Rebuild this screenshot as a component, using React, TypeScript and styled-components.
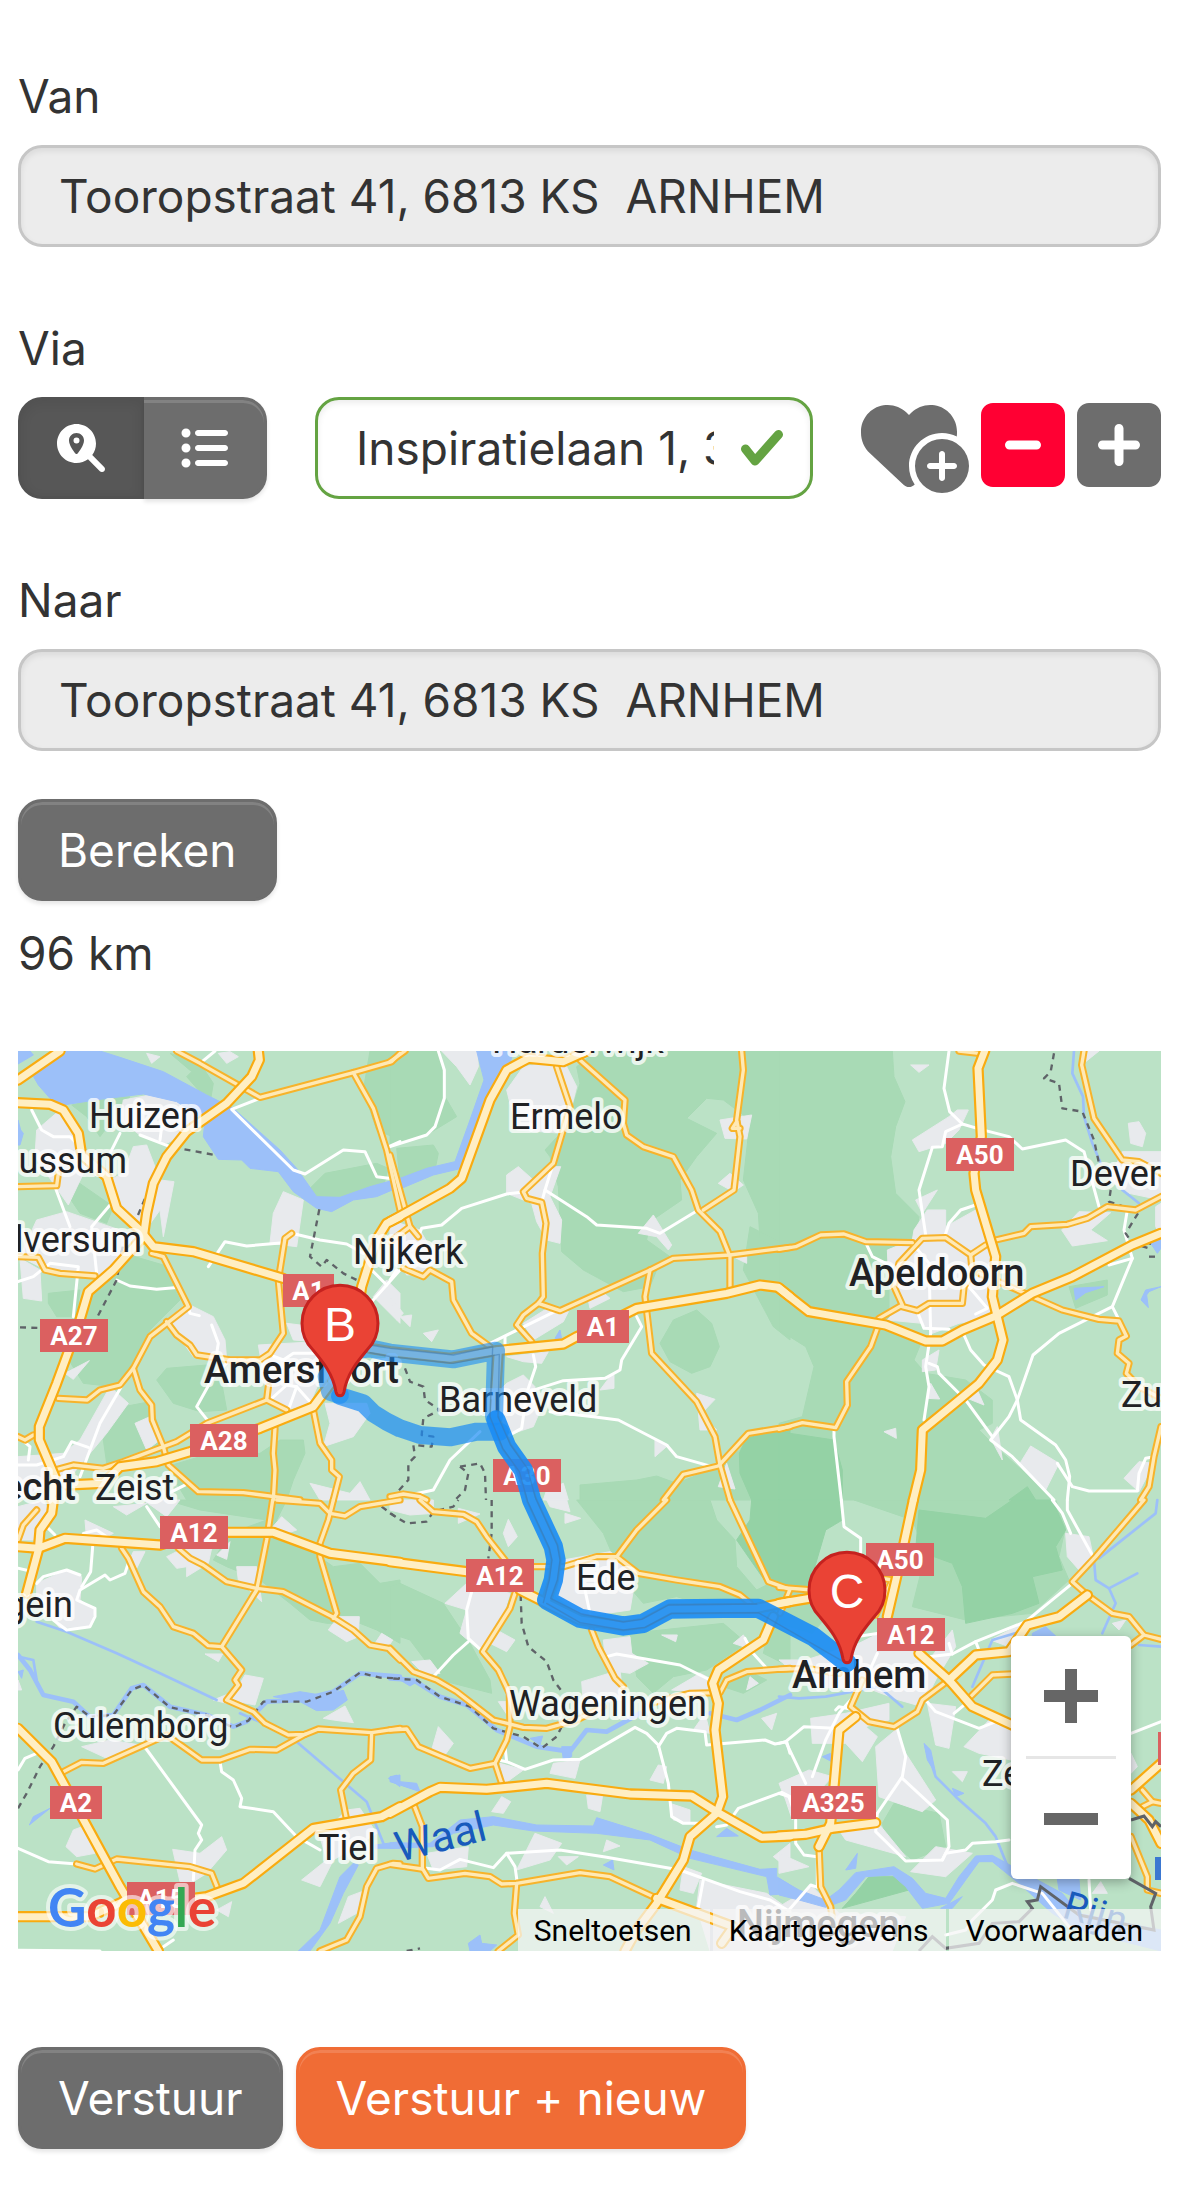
import React from "react";
import styled, { createGlobalStyle, css } from "styled-components";
import {
  FaHeartCirclePlus,
  FaListUl,
  FaMagnifyingGlassLocation,
  FaSquareMinus,
  FaSquarePlus,
} from "react-icons/fa6";

const GlobalStyle = createGlobalStyle`
  *, *::before, *::after { box-sizing: border-box; }
  body {
    margin: 0;
    background: #fff;
    color: #333;
    font-family: Inter, "Liberation Sans", sans-serif;
    font-size: 46px;
    line-height: 72px;
  }
  button, input { font: inherit; color: inherit; }
`;

const Page = styled.form`
  display: flex;
  flex-direction: column;
  padding: 60px 18px 45px;
`;

const Field = styled.div`
  display: flex;
  flex-direction: column;
  gap: 13px;
  margin-bottom: 65px;
`;

const Label = styled.label`
  align-self: flex-start;
`;

const TextInput = styled.input<{ $valid?: boolean }>`
  width: 100%;
  min-width: 0;
  height: 102px;
  padding: 0 ${(p) => (p.$valid ? 96 : 38)}px 0 38px;
  border: 3px solid ${(p) => (p.$valid ? "#64a342" : "#c6c6c6")};
  border-radius: 24px;
  background: ${(p) => (p.$valid ? "#fff" : "#ececec")};
  box-shadow: inset 0 3px 6px rgba(0, 0, 0, 0.08);
  outline: none;
`;

const ViaRow = styled.div`
  display: flex;
  gap: 48px;
`;

const Toggle = styled.div`
  display: flex;
  border-radius: 24px;
`;

const raised = css`
  box-shadow: inset 0 3px 0 rgba(255, 255, 255, 0.15), 0 3px 4px rgba(0, 0, 0, 0.1);
`;

const ToggleButton = styled.button<{ $active?: boolean }>`
  display: flex;
  align-items: center;
  justify-content: center;
  width: ${(p) => (p.$active ? 126 : 123)}px;
  height: 102px;
  padding: 0;
  color: #fff;
  font-size: 48px;
  background: ${(p) => (p.$active ? "#575757" : "#6d6d6d")};
  border: 3px solid ${(p) => (p.$active ? "#525252" : "#6d6d6d")};
  border-radius: ${(p) => (p.$active ? "24px 0 0 24px" : "0 24px 24px 0")};
  border-left-width: ${(p) => (p.$active ? 3 : 0)}px;
  ${(p) => (p.$active ? "box-shadow: inset 0 3px 12px rgba(0, 0, 0, 0.07);" : raised)}
`;

const ValidatedInput = styled.div`
  position: relative;
  flex: 1;
  min-width: 0;
`;

const ValidMark = styled.svg`
  position: absolute;
  top: 33px;
  right: 30px;
  width: 42px;
  height: 36px;
  fill: none;
  stroke: #64a342;
  stroke-width: 9px;
  stroke-linecap: round;
  stroke-linejoin: round;
`;

const Actions = styled.div`
  display: flex;
  gap: 12px;
`;

const IconButton = styled.button<{ $tone?: "danger"; $width?: number }>`
  display: flex;
  width: ${(p) => p.$width ?? 84}px;
  height: 96px;
  padding: 0;
  border: 0;
  background: none;
  color: ${(p) => (p.$tone === "danger" ? "#ff0033" : "#6d6d6d")};
  svg { width: 100%; height: 100%; }
`;

const Button = styled.button<{ $primary?: boolean }>`
  height: 102px;
  padding: 0 37px;
  color: #fff;
  background: ${(p) => (p.$primary ? "#f06c35" : "#6d6d6d")};
  border: 3px solid ${(p) => (p.$primary ? "#f06c35" : "#6d6d6d")};
  border-radius: 24px;
  ${raised}
`;

const Result = styled.div`
  display: flex;
  flex-direction: column;
  align-items: flex-start;
  gap: 16px;
  margin-top: -17px;
`;

const Distance = styled.output`
  display: block;
`;

const MapFrame = styled.section`
  position: relative;
  height: 900px;
  margin: 62px 0 96px;
  overflow: hidden;
  background: #bbe2c6;
  font-family: Roboto, "Liberation Sans", sans-serif;
`;

const MapCanvas = styled.svg`
  display: block;
  width: 100%;
  height: 100%;
`;

const ZoomControl = styled.div`
  position: absolute;
  right: 30px;
  bottom: 72px;
  width: 120px;
  background: #fff;
  border-radius: 6px;
  box-shadow: 0 3px 12px rgba(0, 0, 0, 0.3);
`;

const ZoomButton = styled.button`
  display: flex;
  align-items: center;
  justify-content: center;
  width: 100%;
  height: 120px;
  padding: 0;
  border: 0;
  background: none;
`;

const ZoomDivider = styled.div`
  height: 3px;
  margin: 0 15px;
  background: #e6e6e6;
`;

const Attribution = styled.div`
  position: absolute;
  right: 0;
  bottom: 0;
  display: flex;
  gap: 3px;
  font-size: 30px;
  line-height: 40px;
`;

const attributionItem = css`
  padding: 2px 18px 0 16px;
  border: 0;
  color: #000;
  text-decoration: none;
  background: rgba(245, 245, 245, 0.72);
`;

const AttributionButton = styled.button`
  ${attributionItem}
`;

const AttributionLink = styled.a`
  ${attributionItem}
`;

const Footer = styled.div`
  display: flex;
  gap: 13px;
`;

/* ---- Map drawing. Sheet geometry is stored in thirds of a pixel. ---- */

interface Sheet {
  x: number;
  y: number;
  parks: string[];
  forest: string[];
  urban: string[];
  water: string[];
  streams: string[];
  rivers?: string[];
  motorways: string[];
  roads: string[];
  streets: string[];
  borders: string[];
}

const sheets: Sheet[] = [
  {
    x: -54,
    y: -33,
    parks: [
      "M510 40L575 95L560 110L630 190L640 130L600 70Z",
      "M215 195L320 170L390 170L330 250L300 290L260 230Z",
      "M1110 33H1200V300L1130 270L1090 150Z",
      "M930 445L975 400L1130 370L1165 385L1150 440L1060 475L950 470Z",
      "M370 640L490 675L540 780L450 870L400 985L340 1040L250 1030L200 950L230 880L250 790L340 700Z",
      "M145 760L240 750L230 830L170 830L145 790Z",
      "M210 410L340 500L320 550L240 520L200 460Z",
      "M500 985L620 975L660 1000L680 1110L600 1115L520 1090L470 1020Z",
      "M345 1105L450 1085L500 1230L320 1270L310 1200Z",
      "M500 1280L600 1250L780 1240L840 1200L910 1200L915 1240L880 1320L860 1380H560Z",
    ],
    forest: [],
    urban: [
      "M370 180L450 165L600 190V260L500 310L420 285L360 240Z",
      "M110 270L180 210L240 330L260 380L205 495L160 430L105 350Z",
      "M400 320L440 315L480 420L522 425L490 590L480 510L430 580L350 500L330 420L370 400Z",
      "M110 540L200 515L330 560L420 590L370 660L290 710L160 700L60 650Z",
      "M500 840L560 790L640 830L675 900L680 960L580 950Z",
      "M850 455L910 480L890 620L810 610L820 520Z",
      "M440 40L480 50L455 70Z",
      "M655 40L690 35L715 50L680 70Z",
      "M775 915L950 905L960 1020L930 1090L860 1110L800 1060Z",
      "M330 1040L385 1090L320 1180L220 1300L54 1380V1250L190 1240L240 1200Z",
      "M405 1150L450 1130L480 1200L440 1230Z",
      "M975 1090L1100 1090L1110 1120L1060 1190L970 1220L990 1150Z",
      "M930 1330L1050 1360L1080 1325L1110 1380H960Z",
      "M860 850L940 860L950 905L880 900Z",
      "M1120 770L1160 720L1200 760V850Z",
      "M60 655L120 690L125 783L70 775Z",
      "M195 1000L268 962L220 1018Z",
    ],
    water: [
      "M95 100L190 33H300L360 52L490 95L620 165L700 205L840 330L890 385L950 470L1020 472L1110 440L1200 415V440L1130 470L1060 480L995 515L950 505L880 455L835 395L750 385L725 360L655 358L610 290L615 240L530 185L430 162L300 178L190 195L150 175L115 135Z",
      "M54 33H90L100 45L54 72Z",
      "M54 240L62 270L70 280L60 315H54Z",
    ],
    streams: [],
    motorways: [
      "54,120 180,33",
      "54,188 150,193 190,210 235,280 245,345 320,410 350,505 420,570 460,620 580,635 850,715",
      "775,33 778,60 755,110 680,190 560,275 500,350 460,430 440,520 430,590 340,690 265,755 240,840 170,1030 118,1160 118,1200 165,1310 155,1380",
      "200,1335 310,1330 360,1280 470,1265 570,1235 780,1165 940,1100 1000,1020 1060,900 1085,740 1110,660 1135,590 1160,550 1200,530",
    ],
    roads: [
      "530,33 600,70 780,172 1060,98 1175,65 1200,40",
      "1060,98 1120,205 1160,330 1200,510",
      "54,440 170,437 175,400",
      "54,650 115,652 135,690 180,700 285,708",
      "455,640 490,650 560,790 565,800 450,890 400,985 360,1035 300,1050 262,1080 175,1075",
      "500,845 530,885 570,915 590,945 690,960 780,960 810,940 850,880 835,720 855,595 875,580",
      "400,985 420,1050 455,1095 457,1140 490,1220 505,1275 595,1355 730,1358 900,1380",
      "165,1290 220,1275 310,1285 370,1265 530,1205 620,1150 800,1080 805,1040",
      "800,1080 860,1110",
      "825,1165 820,1240 825,1290 820,1380",
      "940,1110 960,1210 995,1260 995,1290 1018,1310 1000,1380",
      "54,1190 75,1200 100,1185",
    ],
    streets: [
      "95,210 125,270 160,290 210,290 225,305",
      "360,280 330,340",
      "420,285 510,320",
      "485,260 480,300",
      "165,440 210,560",
      "330,495 275,560 290,700",
      "54,725 100,710 150,670 235,680 220,830",
      "350,720 390,738 470,748 540,742",
      "625,680 675,605 740,618 850,608",
      "875,580 960,600 1040,612 1090,640",
      "780,175 695,208 880,390 915,402 1030,330 1095,335 1130,410 1190,418",
      "1155,325 1200,305",
      "600,70 645,33",
      "370,1030 300,1150 240,1310",
      "54,1275 110,1275 190,1250 215,1205 265,1222",
      "690,960 640,1010 590,1100 630,1150",
      "635,855 655,910 650,940",
      "565,800 570,820 598,827",
      "810,1080 860,1035 890,1040 865,1110",
      "810,945 850,960 880,940 950,940",
      "890,1040 930,1085",
      "1115,690 1160,735 1115,785",
      "1160,735 1200,690",
      "54,1190 90,1220 85,1260",
      "505,1360 565,1330",
    ],
    borders: [
      "520,322 645,345",
      "510,325 480,390 450,440 395,570",
      "368,620 350,720 290,835",
      "60,862 120,864",
      "958,508 930,650 965,680 980,660 1030,700 1080,725 1075,760",
    ],
  },
  {
    x: 1116,
    y: -33,
    parks: [
      "M0 60L50 33H150L165 170L200 230L110 285L0 315Z",
      "M20 325L130 315L145 340L135 390L30 420Z",
      "M560 80L620 33H1200V640L1110 600L1105 520L1060 420L1080 240L1000 180L950 175L890 235L980 280L920 350L870 420L875 480L780 545L770 600L840 650L800 690L780 740L700 755L580 690L515 635L505 440L480 350L465 330L530 260L570 130Z",
      "M1080 560L1200 620V900L1150 860L1060 690Z",
      "M850 840L920 810L965 850L988 920L960 980L905 1000L840 965L810 910Z",
      "M570 1335L740 1320L800 1308L860 1330L960 1290L1050 1230L1070 1195L1200 1150V1380H570Z",
    ],
    forest: ["M1070 1195L1200 1160V1380H1085L1050 1300L1048 1240Z"],
    urban: [
      "M155 33H262L265 80L240 135L200 80Z",
      "M400 80L520 60L560 140L540 220L520 280L380 270L350 150Z",
      "M350 405L385 380L430 420L490 380H512L480 470L515 540L510 610L470 600L440 545L425 490L350 460Z",
      "M990 240L1085 225L1070 297L1005 295Z",
      "M985 430L1020 400L1060 435L1030 455Z",
      "M745 580L790 525L845 615L835 630L800 590Z",
      "M0 540L90 570L130 640L120 700L50 705L0 620Z",
      "M595 780L630 750L660 775L600 805Z",
      "M400 850L480 800L535 815L520 845L430 900Z",
      "M350 1030L400 1005L435 1040V1100L460 1090L430 1160L370 1180L330 1160L300 1080Z",
      "M350 950L475 935L455 970L400 965Z",
      "M630 1050L660 1010L672 1005V1045Z",
      "M920 1060L975 1078L935 1120L980 1170L930 1170Z",
      "M795 1250V1200L835 1215Z",
      "M30 830L65 825L60 860Z",
      "M100 880L145 870L125 905Z",
      "M0 770L40 820L20 840Z",
      "M985 1340L1010 1270L1035 1347Z",
      "M470 1350L520 1330L535 1380H460Z",
      "M1030 650L1070 640V670Z",
    ],
    water: [
      "M260 33H370L355 90L300 180L215 385L130 405L30 447V415L110 385L195 365L240 240L282 120Z",
      "M495 895L510 870L515 897Z",
    ],
    streams: [],
    motorways: [
      "0,545 180,445 215,415 300,180 350,90 415,55 520,65 590,33",
      "-60,925 0,935 180,955 320,932 520,912 560,890 650,850 740,805 1010,760 1110,735 1165,742 1200,770",
      "325,932 312,1130 350,1220 400,1290 425,1380",
    ],
    roads: [
      "0,65 45,33",
      "0,345 60,560 85,590",
      "60,560 0,605",
      "500,80 540,200 490,370 400,455 410,475 455,487 468,550 457,640 460,770 445,790 400,825 380,855 425,905",
      "570,60 705,180 700,250 710,285 760,320 850,350 905,450 925,510 990,575 1020,650 1020,740",
      "1055,33 1060,90 1040,240 1050,290 1032,450 940,510",
      "1040,245 1027,265 1050,265",
      "445,790 510,812 780,690 850,655 1020,645 1200,622",
      "780,690 765,770 785,940 920,1085 975,1190 990,1275 1020,1380",
      "820,1380 880,1303 985,1278 1075,1180 1200,1160",
      "40,685 100,710 120,690 185,725 190,780 245,880 300,920",
      "0,1370 40,1362 90,1370 110,1380",
    ],
    streets: [
      "145,33 163,90 163,175 135,260 110,285 0,320",
      "490,370 465,450 455,487",
      "465,450 590,530 620,555 770,565 810,580 925,510",
      "395,457 350,462 215,505 155,555 95,565 85,590",
      "740,830 755,860 695,960 690,990 645,1015 520,1022 400,1060",
      "430,945 437,980 410,1060 395,1165 350,1190",
      "480,1115 610,1130 685,1140 830,1215 860,1250 985,1285",
      "270,1175 180,1260 130,1350 60,1365",
      "500,812 300,910",
      "345,890 345,930",
      "0,720 20,690",
    ],
    borders: [
      "45,985 60,1025 100,1040 105,1080 150,1110 100,1135 95,1185 130,1190 125,1220 70,1215 75,1250 55,1270 55,1320 0,1380",
      "210,1280 270,1270 285,1300 288,1380",
      "210,1280 235,1300 225,1350 195,1380",
    ],
  },
  {
    x: 2283,
    y: -33,
    parks: [
      "M0 33H340L345 110L378 185L350 260L335 350L350 460L420 530L410 590L330 640V850L430 900L405 960L440 1000L560 1020L640 1080V1150L600 1170L660 1230L740 1300L820 1380H0V1150L70 1130L105 980L80 920L0 870Z",
      "M870 740L985 720V765L890 805Z",
    ],
    forest: ["M0 1175L165 1200L190 1290V1380H0Z", "M690 1380L745 1340L770 1380Z"],
    urban: [
      "M400 300L510 230L535 210H568L540 270L500 310L420 335Z",
      "M410 480L475 450L430 520Z",
      "M405 570L445 510H500V560L590 510L640 650L660 740L640 830L540 850L460 880L430 850L325 840L370 790L330 740L325 630L400 600Z",
      "M848 570L900 515L995 518L935 570L985 602L880 618Z",
      "M1030 335H1146V480L1050 460L990 420Z",
      "M1048 250L1080 245L1100 280L1090 320L1055 310Z",
      "M395 75H450L420 97Z",
      "M430 960L480 930L470 990L430 995Z",
      "M445 1075L455 1030L482 1077Z",
      "M720 1275L755 1218L840 1270L800 1350Z",
      "M1035 1315L1080 1265L1125 1270L1080 1355Z",
      "M315 1175L350 1165L352 1195Z",
      "M565 1075L595 1050L615 1095Z",
      "M635 1195L655 1160L670 1260Z",
      "M1130 500L1146 490V590L1130 560Z",
      "M925 33H960L920 65Z",
    ],
    water: [
      "M885 745L975 740L920 758L890 780Z",
      "M1146 740L1110 755L1103 765L1108 803L1086 780L1100 750Z",
      "M1115 610L1146 600V625L1135 640Z",
    ],
    streams: ["885,33 880,100 912,170 915,230 940,310 965,370", "1030,450 1080,490"],
    motorways: [
      "617,33 597,85 607,290 585,400 590,450 650,650 640,770 672,900 655,960 600,1030 540,1080 430,1170 425,1290 403,1380",
      "0,745 90,815 320,855 440,903 490,903 550,870 650,828 760,760 880,710 1060,615 1146,580",
    ],
    roads: [
      "0,628 50,620 125,585 195,582 260,605 400,608",
      "540,33 600,40",
      "915,33 908,75 945,235 1030,360 1080,365 1146,400",
      "300,835 370,795 345,740 360,670 430,595 500,593 575,645 580,700 555,740 550,790 450,790 415,812 370,800",
      "575,645 620,615",
      "650,600 735,580 755,560 865,553 925,535 985,500 1070,510 1146,470",
      "600,700 670,730 850,810 960,838 1020,843 1042,888 1020,900 1015,940 1050,970 1042,1000 1080,1040 1146,1075",
      "295,865 275,920 203,1025 205,1095 170,1163 70,1148 0,1168",
      "1146,1160 1125,1250 1110,1340 1085,1380",
    ],
    streets: [
      "510,33 495,145 512,215 550,252 605,268 690,290 730,327 860,300 915,335 960,500",
      "550,252 500,275 490,320 460,322 420,450 440,585",
      "497,590 510,550 545,510 590,495",
      "260,608 280,650 340,680",
      "400,610 450,670 455,880 440,980 450,1040 435,1140",
      "415,815 435,865 510,868",
      "555,885 575,930 615,975 690,1010 715,1080 725,1140 830,1215 860,1260 872,1310 865,1380",
      "450,970 475,980 480,1000 560,1080 640,1190",
      "1045,510 1035,570 1060,655 1000,800 840,880 762,945 715,1080 690,1130 635,1200 700,1250 825,1380",
      "1000,800 1020,840",
      "990,675 1060,655",
      "835,1270 880,1340 930,1353 1075,1353 1080,1300 1100,1255 1125,1250",
      "165,1165 165,1190 187,1380",
      "570,740 625,805 590,822",
    ],
    borders: [
      "825,40 815,95 795,115 840,130 850,205 910,215 945,300 960,370",
      "995,450 990,485 1080,515 1040,580 1060,610 1110,625 1115,600 1146,585",
      "1110,650 1130,650",
    ],
  },
  {
    x: -54,
    y: 1347,
    parks: [
      "M500 0H860L830 60L900 130L1000 200L1080 190L1140 250L1200 240V430L1130 390L1080 370L980 370L930 360L870 310L780 240L680 200L640 180L690 100L800 60L600 30Z",
    ],
    forest: [],
    urban: [
      "M54 20L130 0L160 60L100 120H54Z",
      "M255 60L340 100L320 110L260 120Z",
      "M340 20L440 10L380 45Z",
      "M430 0H540L500 50Z",
      "M400 155H435L410 205L385 190Z",
      "M500 170L540 150L635 145L625 190L560 230V200L530 205Z",
      "M650 165L690 125L680 178Z",
      "M710 200H770L785 305L715 240Z",
      "M810 90L845 50L890 90L830 110Z",
      "M110 250L200 210L245 230L240 300L285 330L270 380L180 385L110 300Z",
      "M985 390L1015 350H1078L1075 410L1040 425Z",
      "M1125 430L1145 400L1178 420L1165 440Z",
      "M615 462H668L655 485Z",
      "M735 525L790 535L765 615L690 600Z",
      "M640 600L690 580L680 610Z",
      "M970 655L1035 618L1060 668L1000 660Z",
      "M245 740L330 720L420 735L320 775Z",
      "M220 990L260 975L285 1060L230 1070L198 1040Z",
      "M518 1048L600 1060L665 1010L680 1050L620 1120L580 1145H540Z",
      "M1040 930L1080 925L1130 1000L1000 1080L960 1160L905 1140L980 1080L960 1010Z",
      "M650 1230L695 1205L685 1250Z",
      "M1015 1270L1045 1190L1085 1175L1070 1240Z",
      "M54 540L65 570H54Z",
    ],
    water: [
      "M820 590L900 575L980 588L1030 570L1042 600L1000 630L950 632L900 605Z",
      "M895 1353L960 1290L1020 1130L1060 1090L1075 1095L1030 1180L990 1270L930 1353Z",
      "M1125 1035L1200 1025V1045H1125Z",
      "M1165 835L1190 825L1200 860Z",
      "M88 975L100 950L150 925Z",
      "M54 515L70 510L65 535Z",
    ],
    streams: [
      "110,365 200,395 350,460 480,520 650,600",
      "720,640 860,700 1100,905 1150,1030",
      "54,470 100,480 110,540",
    ],
    rivers: [
      "54,465 90,510 130,585 220,605 270,650 340,645 395,565 430,555 510,620 620,645 700,680 740,665 800,605 900,600 1000,575 1080,520 1200,530",
    ],
    motorways: [
      "54,140 115,145 195,115 480,135 560,110 680,97 820,97 990,160 1200,187",
      "160,0 155,40 120,90 115,150 80,280",
      "54,685 155,785 240,940 360,1160 475,1353",
      "54,1250 270,1250 380,1200 540,1200 620,1190 730,1150 940,985 1145,950 1200,920",
    ],
    roads: [
      "110,30 70,75 54,120",
      "365,145 385,175 430,275 480,320 520,380 580,400 625,437 665,440 725,510 705,540 715,555 680,600 760,635 795,670 865,705 915,703 955,687 1115,698 1200,685",
      "535,145 570,175 610,195 680,245 770,265 850,275 1000,352 1060,390 1110,435 1165,445 1200,480",
      "818,0 800,120 770,270 665,440",
      "830,0 960,10 990,40 1035,48 1080,20 1200,0",
      "1000,0 985,60 960,130 960,170 1010,340 1000,355",
      "190,815 245,787 310,790 500,705 605,780 660,780 750,748 830,750 915,703",
      "1115,698 1112,780 1060,820 1022,870 1038,950",
      "230,1092 285,1107 350,1077 570,1100 635,1120 655,1170",
      "960,1353 1040,1320 1080,1250 1100,1160 1130,1105 1180,1090 1200,1092",
    ],
    streets: [
      "278,140 272,215 245,260",
      "385,190 375,220 330,240 315,225 240,270 230,300 285,325 285,350 270,380 200,390 160,360",
      "110,250 130,230 200,210 240,225",
      "54,205 100,215",
      "54,810 75,775 110,760",
      "430,735 605,975 595,1000 605,1020 585,1050 580,1140",
      "660,785 665,815 700,840 725,895 720,920 820,935 890,1010 960,1050",
      "54,1045 145,1085 230,1092",
      "440,20 480,80",
      "145,85 165,105",
      "54,1351 300,1353",
      "250,100 290,90 320,110",
      "520,1320 490,1340",
    ],
    borders: [
      "54,925 80,880 120,800 160,740 195,670 230,620 270,650 340,645 395,570 430,555 510,622 620,645 700,683 745,662 790,605 920,605 1000,575 1080,518 1140,533 1200,535",
      "1145,20 1200,60",
    ],
  },
  {
    x: 1116,
    y: 1347,
    parks: [
      "M560 0H960L980 60L1035 120L1040 200L1100 270L1160 240L1200 260V310L960 320L860 290L760 310L700 240L640 100Z",
      "M0 260L30 250L160 310L240 430L300 540L305 580L150 540L60 420L0 400Z",
      "M720 400L1000 370L1070 430L950 510L850 530L790 580L740 530Z",
      "M1000 560L1070 510L1130 540L1060 580Z",
      "M1140 370L1200 400V500L1120 460Z",
    ],
    forest: ["M1085 0H1200V240L1130 250L1040 120L1080 60Z"],
    urban: [
      "M0 0H130V40L60 45L0 30Z",
      "M340 100L355 58L382 110L355 140Z",
      "M525 40L572 55L525 70Z",
      "M470 0H530L540 35L480 20Z",
      "M205 25L270 42L205 70Z",
      "M165 310L230 250L360 280L330 380L280 460L210 400L230 330Z",
      "M320 390L375 420L350 455L300 430Z",
      "M520 180L660 155L740 210L720 330L580 350L500 290Z",
      "M640 420L720 410L725 460L775 490L720 520L650 510Z",
      "M575 545L690 510L700 600L580 610Z",
      "M845 570L930 520L970 540L960 580Z",
      "M65 485L120 480L150 520L100 520Z",
      "M815 405H862L857 425Z",
      "M145 680L190 730L165 765L125 750Z",
      "M325 605H360L355 650Z",
      "M490 790L570 780L555 835L480 820Z",
      "M330 790L400 810L345 850Z",
      "M780 840L805 795L830 800L820 850Z",
      "M590 885H638L630 935L595 925Z",
      "M305 935L335 890L362 905L340 940Z",
      "M380 1110L435 1000L515 1030L480 1080Z",
      "M640 1055L650 1020L690 1038Z",
      "M505 1070H565L530 1095Z",
      "M110 1060L235 1040L230 1100L130 1110Z",
      "M870 1170L880 1100L935 1120L910 1180Z",
      "M840 910L900 930V970L850 960Z",
      "M910 690L945 640L960 700Z",
      "M930 1140L1130 1180L1200 1230V1353H960L920 1220Z",
      "M1150 1070L1200 1030V1110Z",
      "M450 1220L465 1190L490 1240Z",
      "M1115 655L1160 640L1145 690Z",
      "M1070 570L1080 530L1105 550Z",
      "M1030 430L1060 405L1090 450Z",
    ],
    water: [
      "M0 1028L120 1030L210 960L310 950L440 975L610 978L620 953L780 1003L900 1050L1110 1108L1160 1105V1130L1200 1155V1180L1140 1185L1130 1130L900 1075L780 1020L620 1000L430 993L310 975L190 1000L130 1040L0 1045Z",
      "M640 1095L668 1080L672 1110Z",
      "M980 1010L1010 985L1045 1008Z",
      "M235 1330L270 1305L275 1330L320 1335L300 1353H240Z",
      "M0 830L30 825V845L80 850L90 875L0 845Z",
      "M30 540H90L60 558Z",
      "M515 740H545V770L520 780Z",
      "M420 715L458 708L450 735Z",
    ],
    streams: [],
    rivers: [
      "0,535 70,540 150,590 230,615 320,690 440,740 540,755 590,690 650,695 750,640",
      "960,640 1040,660 1110,630 1200,585",
    ],
    motorways: [
      "0,185 230,215",
      "390,270 470,310 570,360 700,378 760,370 840,327 1100,325 1200,305",
      "0,940 120,875 150,862 290,868 470,850 720,882 905,888 980,935 1115,1012 1200,1008",
      "1150,350 1120,420 985,510 968,550 985,610 975,690 998,890 980,940 900,1010 880,1080 800,1210 740,1290 705,1353",
      "800,1195 1030,1280 995,1330",
      "425,0 490,140 498,180 490,240 470,300",
    ],
    roads: [
      "90,0 130,35 220,43 260,65 290,110 345,180",
      "430,200 520,200 620,170 680,170 740,90 830,0",
      "680,170 745,220 860,240 990,260 1050,285 1080,310",
      "1020,0 1135,245 1200,268 1170,340",
      "375,280 360,325 278,455 325,510 358,580 360,680 350,720 315,790 335,850",
      "0,445 70,515 140,540 200,575 310,660 400,682 470,685 560,660 640,620",
      "605,390 625,440 675,535 700,560",
      "780,610 900,580 990,578 1010,540 1070,515 1200,505",
      "0,690 50,687 85,740 240,805 315,790",
      "70,910 97,980 97,1105 115,1135 225,1120 300,1130 335,1152 380,1150 570,1118 660,1130 800,1195",
      "0,1093 97,1107",
      "380,1150 373,1240 385,1305 325,1353",
    ],
    streets: [
      "245,275 230,330 235,415 278,455",
      "235,425 190,465 130,530",
      "585,270 600,340",
      "650,470 680,462 870,495 960,540",
      "1065,415 1085,455 1130,505",
      "345,740 350,785 405,808 490,780 570,778 735,682 770,700 805,735 835,850 845,950 880,970 940,970",
      "805,740 830,700 860,685 945,695 950,735 1125,720 1155,732 1190,725 1200,760",
      "110,1105 150,1110 210,1078 310,1103 350,1060 510,1050 650,1072 870,1110 1050,1175 1140,1200 1200,1235",
      "350,1060 375,1100 382,1150",
      "940,1140 925,1220",
      "980,980 1010,975 1045,925 1175,877 1200,890",
      "325,780 350,785",
    ],
    borders: [
      "305,0 305,100 295,175",
      "392,285 395,370 415,440 470,485 490,540 520,580",
      "515,680 500,710 455,745 400,710 310,685 240,620 150,590 80,540 0,535",
      "0,40 50,70 110,65 130,35 190,20 205,0",
      "50,1353 90,1345",
    ],
  },
  {
    x: 2283,
    y: 1347,
    parks: [
      "M0 240L90 260L160 330L100 400L0 370Z",
      "M225 0H830L860 80L840 170L870 240L760 340L560 360L400 320L440 160L400 60Z",
      "M310 970L345 910L480 940L500 1040L400 1080L320 1010Z",
    ],
    forest: [
      "M420 30L620 55L700 0H820L860 90L830 140L850 210L760 230L780 310L700 340L560 370L550 260L520 190L410 150Z",
      "M0 0H180L190 60L140 90L90 260L0 250Z",
      "M230 1180L270 1130L350 1130L390 1170L190 1225Z",
    ],
    urban: [
      "M240 430L300 400L450 480L520 390L530 440L470 540L430 620L360 600L280 570L100 560L0 480H80Z",
      "M95 655L200 640L330 610V660L260 680L295 710L250 785L200 730L100 730Z",
      "M290 740L350 690L380 760L470 900L430 935L300 890Z",
      "M445 610L530 620L510 745L470 735Z",
      "M555 740L640 650L700 690L696 780L600 760Z",
      "M860 100L930 110L945 180L900 210L865 170Z",
      "M635 420L750 360L690 440Z",
      "M0 850L90 810L160 830L40 960L20 900Z",
      "M520 815H565L550 845Z",
      "M180 990L290 960L380 1070L200 1020Z",
      "M395 1115L470 1040L580 1060L500 1130Z",
      "M0 1060L90 1100L0 1120Z",
      "M1000 370L1040 360L1020 390Z",
      "M940 1180L965 1145L985 1180Z",
      "M1056 760L1075 800L1056 820Z",
      "M0 1220L100 1160L180 1240L380 1250L340 1353H0Z",
    ],
    water: [
      "M435 730L455 750L470 820L445 780Z",
      "M520 865L555 880L530 890Z",
      "M200 1110L235 1060L230 1105Z",
      "M760 400L800 380L830 408H760Z",
      "M835 1137H900L905 1200L840 1170Z",
      "M485 1225L550 1190L520 1225Z",
      "M0 1135L60 1170L140 1200L180 1170L230 1118L345 1100L400 1135L440 1180L500 1195L540 1130L590 1068L640 1066L720 1110L850 1180L900 1240L1146 1290V1353L900 1290L820 1240L720 1150L640 1085L600 1085L560 1140L510 1210L430 1225L380 1160L340 1125L260 1130L200 1200L140 1222L60 1200L0 1185Z",
      "M130 770L155 760L158 785Z",
    ],
    streams: [
      "440,740 470,830 530,890 620,970 650,1010 690,1110",
      "580,560 640,420 740,390",
      "945,180 950,240 990,265 1075,220",
      "990,265 1010,310 970,400",
      "1135,0 1130,40 960,175",
      "0,590 60,595 140,590 300,560 370,620",
      "1080,435 1146,440",
    ],
    motorways: [
      "403,0 360,200 325,350",
      "0,310 90,295 200,290",
      "420,460 510,540 580,620 700,675",
      "510,540 590,465 690,455 745,375 840,350 925,285",
      "230,650 180,690 165,860 155,970 120,1040",
      "0,1008 80,1003 160,985 290,968",
      "1056,870 1146,790",
      "1056,910 1110,960 1146,1030",
    ],
    roads: [
      "0,262 100,270",
      "0,508 80,505 180,520",
      "250,540 215,620 270,665 345,680 415,635 430,600 510,540",
      "575,590 640,525 700,522",
      "290,345 340,240 310,235",
      "1095,0 950,170 880,245 925,285",
      "925,285 1000,340 1050,350 1095,405 1146,418",
      "1095,405 1056,435",
      "120,1040 125,1160 155,1220 165,1290",
      "1056,1010 1105,1130 1105,1170 1146,1180",
      "1090,870 1120,905 1090,920",
      "1120,905 1146,910",
    ],
    streets: [
      "187,0 195,80 245,115 245,160",
      "230,410 300,400",
      "295,460 250,560 180,640 140,720 100,830",
      "20,725 75,680 165,685",
      "0,730 20,725 80,850",
      "440,600 470,635 600,685 650,665",
      "525,640 580,595",
      "450,470 520,462 590,425 740,365 880,250",
      "590,425 600,450",
      "510,430 520,462",
      "945,175 865,30 865,0",
      "820,0 850,40 875,100",
      "350,670 380,770 370,830 295,940 290,995 380,1083 490,1080 510,1040 505,960 370,835",
      "490,1080 500,1060 560,1050 580,1030 650,1025 690,1020",
      "50,960 50,1030 75,1065 115,1070 115,1160",
      "30,1230 95,1155 125,1165",
      "0,880 30,890 40,920",
      "500,1305 560,1290 580,1260 640,1200 650,1170 700,1150 790,1180 870,1280",
      "1056,700 1146,665",
      "930,1140 935,1230",
      "170,630 180,620 230,630",
    ],
    borders: [],
  },
];

type Layer = Exclude<keyof Sheet, "x" | "y">;

const Areas = ({ layer, fill }: { layer: Layer; fill: string }) => (
  <g fill={fill} stroke={fill} strokeWidth={3} strokeLinejoin="round">
    {sheets.map((s, i) => (
      <path key={i} transform={`translate(${s.x} ${s.y})`} d={(s[layer] as string[]).join("")} />
    ))}
  </g>
);

const Lines = ({ layer, color, width, dash }: { layer: Layer; color: string; width: number; dash?: string }) => (
  <g fill="none" stroke={color} strokeWidth={width} strokeLinejoin="round" strokeLinecap={dash ? "butt" : "round"} strokeDasharray={dash}>
    {sheets.map((s, i) => (
      <g key={i} transform={`translate(${s.x} ${s.y})`}>
        {((s[layer] ?? []) as string[]).map((points) => (
          <polyline key={points} points={points} />
        ))}
      </g>
    ))}
  </g>
);

interface Place {
  name: string;
  x: number;
  y: number;
  city?: boolean;
  end?: boolean;
}

const places: Place[] = [
  { name: "Harderwijk", x: 474, y: 2 },
  { name: "Huizen", x: 71, y: 77 },
  { name: "ussum", x: 109, y: 122, end: true },
  { name: "lversum", x: 124, y: 201, end: true },
  { name: "Nijkerk", x: 335, y: 213 },
  { name: "Ermelo", x: 492, y: 78 },
  { name: "Apeldoorn", x: 831, y: 235, city: true },
  { name: "Dever", x: 1052, y: 135 },
  { name: "Zu", x: 1103, y: 356 },
  { name: "Amersfoort", x: 186, y: 332, city: true },
  { name: "Barneveld", x: 421, y: 361 },
  { name: "echt", x: 58, y: 449, city: true, end: true },
  { name: "Zeist", x: 77, y: 449 },
  { name: "Ede", x: 558, y: 539 },
  { name: "Wageningen", x: 491, y: 665 },
  { name: "Culemborg", x: 35, y: 687 },
  { name: "Tiel", x: 300, y: 809 },
  { name: "gein", x: 55, y: 566, end: true },
  { name: "Arnhem", x: 774, y: 637, city: true },
  { name: "Ze", x: 964, y: 735 },
  { name: "Nijmegen", x: 719, y: 886, city: true },
];

const PlaceName = styled.text<{ $city?: boolean }>`
  font-size: ${(p) => (p.$city ? 38 : 36)}px;
  font-weight: ${(p) => (p.$city ? 500 : 400)};
  fill: #202124;
  stroke: rgba(255, 255, 255, 0.75);
  stroke-width: 8px;
  stroke-linejoin: round;
  paint-order: stroke;
`;

const WaterName = styled.text<{ $size: number }>`
  font-size: ${(p) => p.$size}px;
  fill: #185abc;
`;

const ShieldText = styled.text`
  font-size: 26px;
  font-weight: 700;
  fill: #fff;
  text-anchor: middle;
`;

const MarkerText = styled.text`
  font-family: "Liberation Sans", Arial, sans-serif;
  font-size: 48px;
  fill: #fff;
  text-anchor: middle;
`;

const LogoText = styled.text`
  font-family: Lato, sans-serif;
  font-size: 53px;
  font-weight: 700;
  paint-order: stroke;
  stroke: rgba(255, 255, 255, 0.6);
  stroke-width: 8px;
  stroke-linejoin: round;
`;

const shields: [string, number, number, number][] = [
  ["A27", 22, 268, 68],
  ["A1", 265, 223, 51],
  ["A28", 172, 373, 68],
  ["A1", 559, 259, 52],
  ["A30", 475, 408, 68],
  ["A50", 928, 87, 68],
  ["A12", 142, 465, 68],
  ["A12", 448, 508, 68],
  ["A2", 32, 735, 52],
  ["A15", 109, 831, 68],
  ["A50", 848, 492, 68],
  ["A12", 859, 567, 68],
  ["A325", 773, 735, 85],
];

const Marker = ({ x, y, letter }: { x: number; y: number; letter: string }) => (
  <g transform={`translate(${x} ${y})`}>
    <path
      d="M-4 68C-7 50-17 38-27 26A38 38 0 1 1 27 26C17 38 7 50 4 68C3 73-3 73-4 68Z"
      fill="#ea4335"
      stroke="#c5221f"
      strokeWidth={3}
    />
    <MarkerText y={17}>{letter}</MarkerText>
  </g>
);

const RouteMap = () => (
  <MapCanvas viewBox="0 0 1143 900" preserveAspectRatio="xMidYMid slice" role="img" aria-label="Route Amersfoort - Arnhem">
    <g transform="scale(0.333333)">
      <Areas layer="parks" fill="#a8dab5" />
      <Areas layer="forest" fill="#94d2a5" />
      <Areas layer="urban" fill="#e8eaed" />
      <Areas layer="water" fill="#9cc0f9" />
      <Lines layer="streams" color="#9cc0f9" width={8} />
      <Lines layer="rivers" color="#9cc0f9" width={14} />
      <Lines layer="streets" color="#fff" width={9} />
      <Lines layer="borders" color="#5f6368" width={7} dash="18 16" />
      <Lines layer="roads" color="#f7b32b" width={22} />
      <Lines layer="roads" color="#ffe9b5" width={10} />
      <Lines layer="motorways" color="#f9ab10" width={34} />
      <Lines layer="motorways" color="#ffeec3" width={21} />
      <g transform="translate(2283 1347)" fill="none" stroke="#5f6368" strokeWidth={9}>
        <polyline points="1050,1135 1130,1180 1115,1220 1125,1290 900,1245 785,1160 775,1200 745,1205 760,1225 720,1265 640,1270 600,1330 500,1345 460,1310 420,1353" />
        <polyline points="1056,960 1095,948 1120,980 1130,965 1146,980" />
      </g>
    </g>
    {shields.map(([name, x, y, w]) => (
      <g key={`${name}-${x}`} transform={`translate(${x} ${y})`}>
        <rect width={w} height={33} fill="#db6060" />
        <ShieldText x={w / 2} y={26}>{name}</ShieldText>
      </g>
    ))}
    <rect x={1140} y={681} width={4} height={33} fill="#db6060" />
    <rect x={1137} y={806} width={8} height={23} fill="#3b78d1" />
    {places.map((p) => (
      <PlaceName key={p.name} x={p.x} y={p.y} $city={p.city} textAnchor={p.end ? "end" : "start"}>
        {p.name}
      </PlaceName>
    ))}
    <WaterName $size={42} transform="translate(381 811) rotate(-14)">Waal</WaterName>
    <WaterName $size={39} transform="translate(1043 866) rotate(16)">Rijn</WaterName>
    <g transform="scale(0.333333) translate(1116 -33)" fill="none" stroke="#1a8cf5" strokeLinecap="round" strokeLinejoin="round">
      <polyline strokeWidth={54} opacity={0.6} points="-150,1065 -180,1055 -190,1010 -130,935 -60,925 0,938 190,958 318,932 312,1130" />
      <polyline strokeWidth={54} opacity={0.7} points="-150,1068 -80,1090 -50,1120 -10,1145 30,1165 90,1185 180,1192 260,1175 330,1175" />
      <polyline
        strokeWidth={58}
        opacity={0.9}
        points="318,1140 350,1220 400,1290 425,1380 490,1520 498,1560 490,1620 470,1680 570,1735 700,1758 760,1750 840,1707 1000,1705 1105,1705 1170,1738 1270,1790 1370,1868"
      />
      <g stroke="#3c78b0" strokeWidth={4} opacity={0.5}>
        <polyline points="-60,915 0,925 190,945 308,920 300,1130 338,1225 388,1295 413,1385 478,1525 486,1560 478,1620 460,1688" />
        <polyline points="-60,938 0,950 190,970 328,943 324,1130 362,1215 412,1285 437,1375 502,1515 510,1560 502,1620 482,1675 575,1722 700,1746 755,1738 835,1695 1100,1692" />
        <polyline points="470,1690 570,1748 700,1770 765,1762 845,1720 1105,1718 1360,1865" />
      </g>
    </g>
    <Marker x={322} y={273} letter="B" />
    <Marker x={829} y={540} letter="C" />
    <LogoText x={30} y={876}>
      <tspan fill="#4285f4">G</tspan>
      <tspan fill="#ea4335">o</tspan>
      <tspan fill="#fbbc04">o</tspan>
      <tspan fill="#4285f4">g</tspan>
      <tspan fill="#34a853">l</tspan>
      <tspan fill="#ea4335">e</tspan>
    </LogoText>
  </MapCanvas>
);

export default function App() {
  return (
    <>
      <GlobalStyle />
      <Page onSubmit={(e: React.FormEvent) => e.preventDefault()}>
        <Field>
          <Label htmlFor="van">Van</Label>
          <TextInput id="van" readOnly value="Tooropstraat 41, 6813 KS  ARNHEM" />
        </Field>
        <Field>
          <Label htmlFor="via">Via</Label>
          <ViaRow>
            <Toggle role="group" aria-label="Invoerwijze">
              <ToggleButton type="button" $active aria-pressed="true" aria-label="Zoek adres">
                <FaMagnifyingGlassLocation />
              </ToggleButton>
              <ToggleButton type="button" aria-pressed="false" aria-label="Kies uit lijst">
                <FaListUl />
              </ToggleButton>
            </Toggle>
            <ValidatedInput>
              <TextInput id="via" $valid defaultValue="Inspiratielaan 1, 3833 AV  LEUSDEN" />
              <ValidMark viewBox="0 0 42 36" aria-hidden="true">
                <path d="M4.5 19L14 31L37.5 4.5" />
              </ValidMark>
            </ValidatedInput>
            <Actions>
              <IconButton type="button" $width={108} aria-label="Bewaar als favoriet">
                <FaHeartCirclePlus />
              </IconButton>
              <IconButton type="button" $tone="danger" aria-label="Verwijder">
                <FaSquareMinus />
              </IconButton>
              <IconButton type="button" aria-label="Voeg toe">
                <FaSquarePlus />
              </IconButton>
            </Actions>
          </ViaRow>
        </Field>
        <Field>
          <Label htmlFor="naar">Naar</Label>
          <TextInput id="naar" readOnly value="Tooropstraat 41, 6813 KS  ARNHEM" />
        </Field>
        <Result>
          <Button type="button">Bereken</Button>
          <Distance htmlFor="van via naar">96 km</Distance>
        </Result>
        <MapFrame aria-label="Kaart">
          <RouteMap />
          <ZoomControl>
            <ZoomButton type="button" aria-label="Inzoomen">
              <svg width="54" height="54" viewBox="0 0 54 54" fill="#666">
                <path d="M21 0H33V21H54V33H33V54H21V33H0V21H21Z" />
              </svg>
            </ZoomButton>
            <ZoomDivider />
            <ZoomButton type="button" aria-label="Uitzoomen">
              <svg width="54" height="12" viewBox="0 0 54 12" fill="#666">
                <path d="M0 0H54V12H0Z" />
              </svg>
            </ZoomButton>
          </ZoomControl>
          <Attribution>
            <AttributionButton type="button">Sneltoetsen</AttributionButton>
            <AttributionButton type="button">Kaartgegevens</AttributionButton>
            <AttributionLink href="#voorwaarden">Voorwaarden</AttributionLink>
          </Attribution>
        </MapFrame>
        <Footer>
          <Button type="submit">Verstuur</Button>
          <Button type="submit" $primary>Verstuur + nieuw</Button>
        </Footer>
      </Page>
    </>
  );
}
